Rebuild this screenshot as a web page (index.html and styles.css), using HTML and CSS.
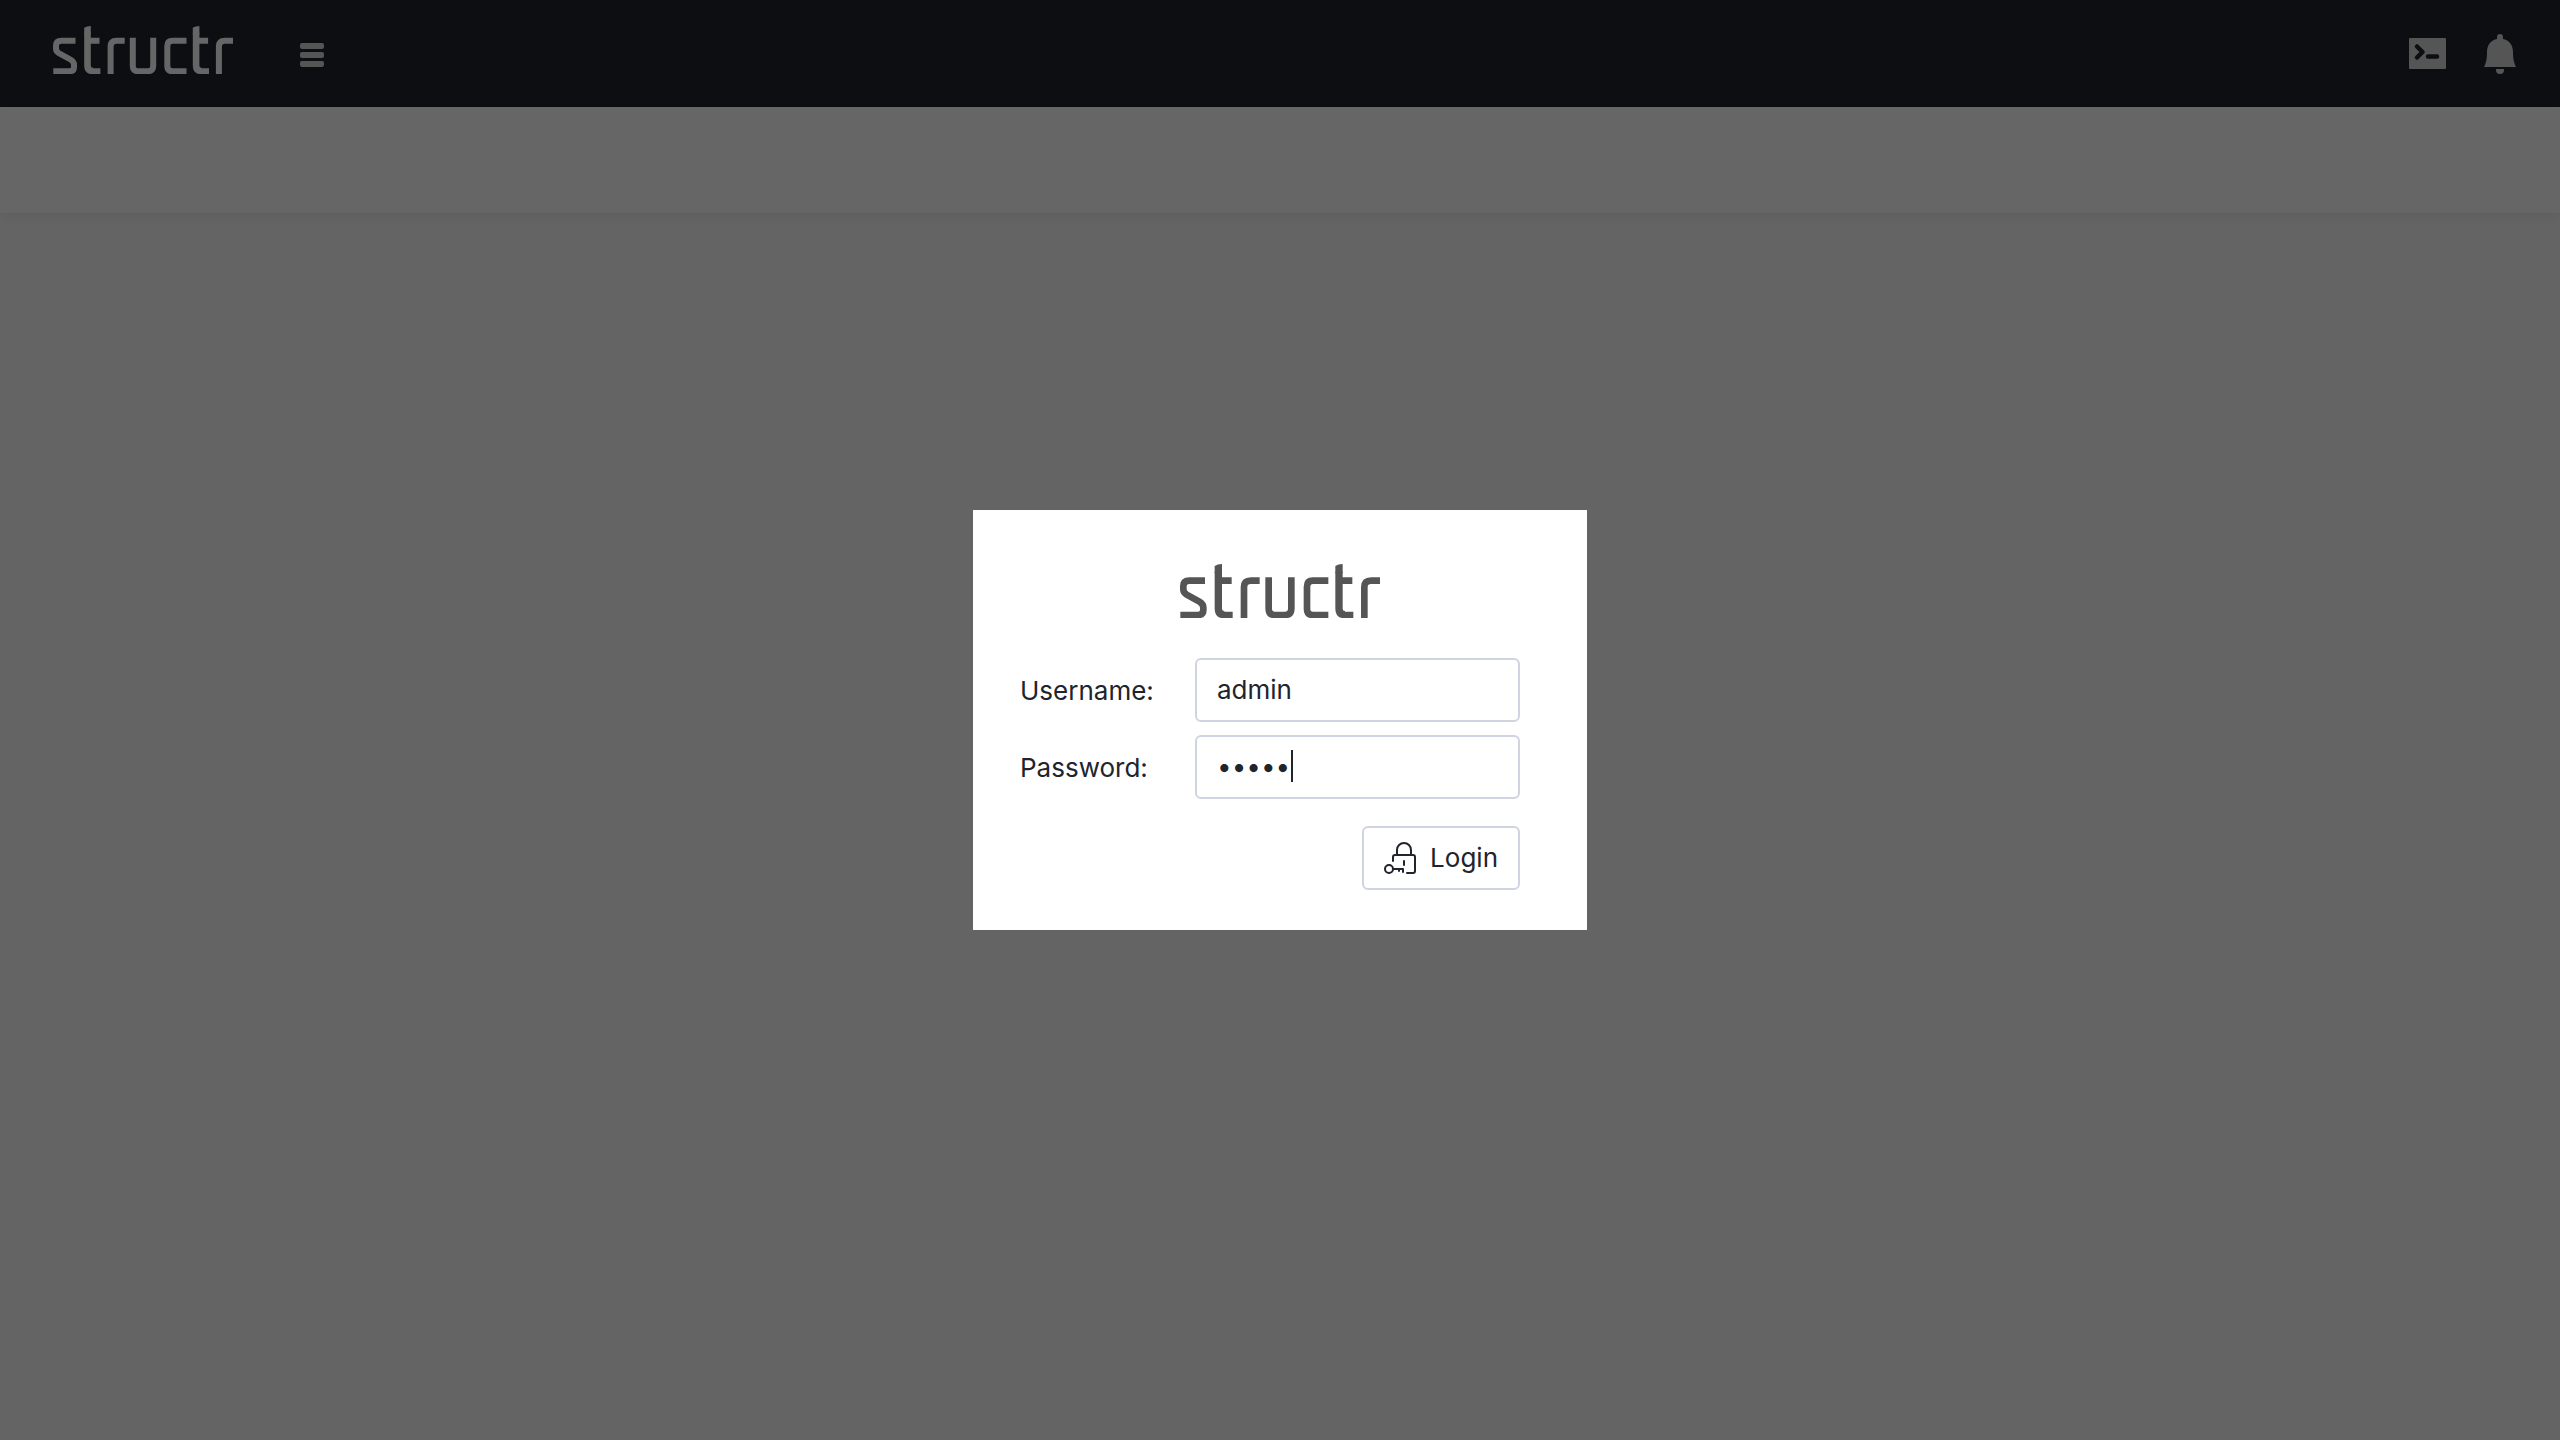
FILE: index.html
```html
<!DOCTYPE html>
<html lang="en">
<head>
<meta charset="utf-8">
<title>Structr</title>
<link rel="stylesheet" href="styles.css">
</head>
<body>
<svg class="defs" aria-hidden="true">
  <symbol id="logo" viewBox="60 72 600 162" preserveAspectRatio="none">
    <g fill="none" stroke="currentColor" stroke-width="20">
      <path d="M135 122H88Q70 122 70 138V148Q70 158 80 164L118 185Q130 192 130 203V210Q130 225 114 225H61"/>
      <path stroke-width="22" d="M175 95V206Q175 224 193 224M537 95V206Q537 224 555 224"/>
      <path d="M190 225H218M175 122H215M552 225H580M537 122H577"/>
      <path d="M252 234V142Q252 122 272 122H299M613 234V142Q613 122 633 122H660"/>
      <path d="M326 112V206Q326 225 345 225H374Q394 225 394 206V112"/>
      <path d="M505 122H459Q441 122 441 140V207Q441 225 459 225H505"/>
    </g>
    <path fill="currentColor" d="M164 78Q172 72 186 72V100H164ZM526 78Q534 72 548 72V100H526Z"/>
  </symbol>
</svg>

<header class="header">
  <a class="brand" href="#" aria-label="structr"><svg class="brand-logo"><use href="#logo"/></svg></a>
  <button class="icon-button menu" type="button" aria-label="Menu">
    <svg width="24" height="25" viewBox="0 0 24 25" fill="currentColor"><rect width="24" height="6" rx="2"/><rect y="9" width="24" height="6" rx="2"/><rect y="18" width="24" height="6" rx="2"/></svg>
  </button>
  <div class="actions">
    <button class="icon-button" type="button" aria-label="Console">
      <svg width="38" height="32" viewBox="0 0 38 32"><rect x="1" y="0" width="37" height="31" rx="1" fill="currentColor"/><path d="M9 8.500L14.500 14L9 19.500M20 18.500H29" fill="none" stroke="#20242d" stroke-width="4.500" stroke-linecap="round" stroke-linejoin="round"/></svg>
    </button>
    <button class="icon-button" type="button" aria-label="Notifications">
      <svg width="32" height="40" viewBox="0 0 32 40" fill="currentColor"><path d="M13 5V3a3 3 0 0 1 6 0v2c6 1 10 6 10 13 0 7 1 11 3 15H0c2-4 3-8 3-15C3 11 7 6 13 5ZM12 35h8v1a4 4 0 0 1-8 0Z"/></svg>
    </button>
  </div>
</header>
<div class="toolbar"></div>
<main class="content"></main>

<div class="overlay">
  <form class="login" role="dialog" aria-label="Login">
    <svg class="login-logo" role="img" aria-label="structr"><use href="#logo"/></svg>
    <div class="fields">
      <label for="username">Username:</label>
      <input id="username" type="text" value="admin">
      <label for="password">Password:</label>
      <div class="password">
        <input id="password" type="password" value="admin">
        <span class="caret"></span>
      </div>
    </div>
    <button class="submit" type="button">
      <svg width="32" height="32" viewBox="0 0 32 32" fill="none" stroke="currentColor" stroke-width="2" stroke-linecap="round" stroke-linejoin="round"><path d="M13 13V8a7 7 0 0 1 14 0v5M9 19V15q0-2 2-2H29q2 0 2 2V29q0 2-2 2H23M20 19v4"/><circle cx="5" cy="27" r="4"/><path d="M9 27H19V30M15 27V29"/></svg>
      Login
    </button>
  </form>
</div>
</body>
</html>
```
FILE: styles.css
```css
* {
  box-sizing: border-box;
}

body {
  margin: 0;
  min-height: 100vh;
  display: flex;
  flex-direction: column;
  background: #fafafa;
  color: #20242d;
  font: 26px/32px Inter, "Liberation Sans", sans-serif;
}

input,
button {
  font: inherit;
  color: inherit;
}

.defs {
  position: absolute;
  width: 0;
  height: 0;
}

.header {
  display: flex;
  align-items: center;
  height: 107px;
  padding: 0 44px 0 53px;
  background: #20242d;
  color: #d4d4d4;
}

.brand {
  display: flex;
  padding-bottom: 8px;
  color: #fff;
}

.brand-logo {
  width: 180px;
  height: 48px;
}

.icon-button {
  display: flex;
  padding: 0;
  border: 0;
  background: none;
}

.menu {
  margin-left: 67px;
  padding-top: 3px;
}

.actions {
  display: flex;
  align-items: center;
  gap: 38px;
  margin-left: auto;
}

.toolbar {
  height: 106px;
  background: #fff;
  box-shadow: 0 0 16px rgba(0, 0, 0, 0.1);
}

.content {
  flex: 1;
}

.overlay {
  position: fixed;
  inset: 0;
  display: flex;
  align-items: center;
  justify-content: center;
  background: rgba(0, 0, 0, 0.6);
}

.login {
  display: flex;
  flex-direction: column;
  width: 614px;
  padding: 54px 67px 40px 47px;
  background: #fff;
}

.login-logo {
  align-self: center;
  width: 200px;
  height: 54px;
  margin: 0 0 40px 20px;
  color: #555;
}

.fields {
  display: grid;
  grid-template-columns: 1fr 325px;
  gap: 13px 0;
  align-items: center;
}

.fields label {
  padding-top: 2px;
}

.fields input {
  display: block;
  width: 100%;
  height: 64px;
  padding: 0 20px 2px;
  border: 2px solid #d0d4e2;
  border-radius: 6px;
  background: #fff;
  outline: 0;
}

.password {
  position: relative;
}

.caret {
  position: absolute;
  left: 96px;
  top: 15px;
  width: 2px;
  height: 32px;
  background: #20242d;
}

.submit {
  display: flex;
  align-items: center;
  align-self: flex-end;
  gap: 14px;
  height: 64px;
  margin-top: 27px;
  padding: 0 20px;
  border: 2px solid #d0d4e2;
  border-radius: 6px;
  background: #fff;
}
```
